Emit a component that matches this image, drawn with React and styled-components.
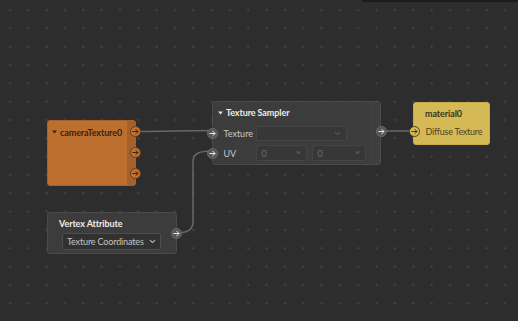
import React from 'react';
import styled, { createGlobalStyle } from 'styled-components';

const GlobalStyle = createGlobalStyle`
	html, body {
		margin: 0;
		padding: 0;
		background: #2d2d2d;
	}
	body {
		font-family: Lato, "Open Sans", sans-serif;
		font-size: 9px;
	}
`;

const Canvas = styled.div`
	position: relative;
	width: 518px;
	height: 321px;
	overflow: hidden;
	background-color: #2d2d2d;
`;

const TopBar = styled.div`
	position: absolute;
	top: 0;
	left: 362px;
	right: 0;
	height: 2px;
	background-color: #1c1c1c;
`;

const Layer = styled.svg`
	position: absolute;
	left: 0;
	top: 0;
	width: 518px;
	height: 321px;
`;

const Node = styled.div`
	position: absolute;
	left: ${props => props.$x}px;
	top: ${props => props.$y}px;
	width: ${props => props.$w}px;
	height: ${props => props.$h}px;
	display: flex;
	border-radius: 3px;
	box-sizing: border-box;
	background-color: ${props => props.$bg || '#3c3c3c'};
	border: 1px solid ${props => props.$border || '#4a4a4a'};
`;

const Body = styled.div`
	flex: 1;
	display: flex;
	flex-direction: column;
	min-width: 0;
`;

const Strip = styled.div`
	width: ${props => props.$w || 9}px;
	display: flex;
	flex-direction: column;
	align-items: flex-end;
	gap: ${props => props.$gap || 0}px;
	padding-top: ${props => props.$top || 0}px;
	background-color: ${props => props.$bg || 'transparent'};
	border-radius: 0 2px 2px 0;
`;

const Header = styled.div`
	display: flex;
	align-items: center;
	gap: 3px;
	height: ${props => props.$h || 20}px;
	padding-left: ${props => props.$pad || 11}px;
	font-weight: 700;
	font-size: 9px;
	letter-spacing: -0.1px;
	color: ${props => props.$color || '#ececec'};
	white-space: nowrap;
`;

const Row = styled.div`
	display: flex;
	align-items: center;
	height: ${props => props.$h || 20}px;
	font-size: 9px;
	color: ${props => props.$color || '#c8c8c8'};
	white-space: nowrap;
`;

const Label = styled.span`
	width: ${props => props.$w || 'auto'};
	margin-left: ${props => props.$ml || 6}px;
	letter-spacing: ${props => props.$ls || 0}px;
	flex-shrink: 0;
`;

const SocketDot = styled.div`
	width: 11px;
	height: 11px;
	border-radius: 50%;
	box-sizing: border-box;
	flex-shrink: 0;
	display: flex;
	align-items: center;
	justify-content: center;
	background-color: ${props => props.$fill};
	border: 1px solid ${props => props.$ring};
	margin-left: ${props => props.$ml || 0}px;
	margin-right: ${props => props.$mr || 0}px;
`;

const Field = styled.div`
	display: flex;
	align-items: center;
	justify-content: space-between;
	box-sizing: border-box;
	flex-shrink: 0;
	width: ${props => props.$w}px;
	height: ${props => props.$h || 15}px;
	margin-left: ${props => props.$ml || 0}px;
	padding: 0 ${props => props.$pad || 5}px;
	background-color: ${props => props.$bg || '#373737'};
	border: 1px solid ${props => props.$border || '#454545'};
	border-radius: 2px;
	color: ${props => props.$color || '#6c6c6c'};
	font-size: 9px;
	letter-spacing: ${props => props.$ls || 0}px;
	white-space: nowrap;
	overflow: hidden;
`;

const Socket = ({ fill, ring, arrow, ml, mr }) => (
	<SocketDot $fill={fill} $ring={ring} $ml={ml} $mr={mr}>
		<svg width="7" height="7" viewBox="0 0 7 7">
			<path d="M0.8 3.5 H6 M3.8 1.3 L6 3.5 L3.8 5.7" fill="none" stroke={arrow} strokeWidth="1" strokeLinecap="round" strokeLinejoin="round" />
		</svg>
	</SocketDot>
);

const Chevron = ({ color }) => (
	<svg width="7" height="5" viewBox="0 0 7 5" style={{ flexShrink: 0 }}>
		<path d="M1 1.2 L3.5 3.6 L6 1.2" fill="none" stroke={color} strokeWidth="1.1" />
	</svg>
);

const Tri = ({ color, w = 5 }) => (
	<svg width={w} height={w * 0.8} viewBox="0 0 5 4" style={{ flexShrink: 0 }}>
		<path d="M0 0.5 H5 L2.5 3.5 Z" fill={color} />
	</svg>
);

const orange = { fill: '#c37430', ring: '#6b3a14', arrow: '#3b230f' };
const gray = { fill: '#565656', ring: '#6a6a6a', arrow: '#e8e8e8' };
const yellow = { fill: '#d8bc55', ring: '#4a4128', arrow: '#3a3320' };

const Grid = () => (
	<Layer>
		<defs>
			<pattern id="dots" x="0.835" y="0.835" width="18.33" height="18.33" patternUnits="userSpaceOnUse">
				<path d="M7.665 9.165 H10.665 M9.165 7.665 V10.665" stroke="#414141" strokeWidth="1" />
			</pattern>
		</defs>
		<rect width="518" height="321" fill="url(#dots)" />
	</Layer>
);

const Wires = () => (
	<Layer>
		<g fill="none" stroke="#686868" strokeWidth="1.5">
			<path d="M137 131.5 C170 131.5 178 130.5 212 130.5" />
			<path d="M177 233 C186 233 193 231 193 222 L193 162 C193 154 198 151 212 151" />
			<path d="M381 131 C395 131 400 131 414 131" />
		</g>
	</Layer>
);

export default function App() {
	return (
		<Canvas>
			<GlobalStyle />
			<Grid />
			<TopBar />
			<Wires />

			<Node $x={47} $y={120} $w={89} $h={66} $bg="#bd6f2f" $border="#a9612a">
				<Body>
					<Header $h={22} $pad={4} $color="#3a2411">
						<Tri color="#3a2411" />cameraTexture0
					</Header>
				</Body>
				<Strip $w={8} $bg="#a5612b" $top={5} $gap={10}>
					<Socket {...orange} mr={-6} />
					<Socket {...orange} mr={-6} />
					<Socket {...orange} mr={-6} />
				</Strip>
			</Node>

			<Node $x={212} $y={101} $w={169} $h={64}>
				<Body>
					<Header $h={21} $pad={5}>
						<Tri color="#e0e0e0" />Texture Sampler
					</Header>
					<Row>
						<Socket {...gray} ml={-6.5} />
						<Label $w="32px">Texture</Label>
						<Field $w={91}>
							<span />
							<Chevron color="#5a5a5a" />
						</Field>
					</Row>
					<Row>
						<Socket {...gray} ml={-6.5} />
						<Label $w="32px">UV</Label>
						<Field $w={51} $h={16}>
							<span>0</span>
							<Tri color="#5a5a5a" />
						</Field>
						<Field $w={54} $h={16} $ml={5}>
							<span>0</span>
							<Tri color="#5a5a5a" />
						</Field>
					</Row>
				</Body>
				<Strip $w={11} $bg="#3f3f3f" $top={24}>
					<Socket {...gray} mr={-6.5} />
				</Strip>
			</Node>

			<Node $x={413} $y={102} $w={77} $h={43} $bg="#d5b954" $border="#c9ad4c">
				<Body>
					<Header $h={21} $color="#3a3322">material0</Header>
					<Row $h={14} $color="#4d4326">
						<Socket {...yellow} ml={-5.5} />
						<Label $ml={6} $ls={-0.25}>Diffuse Texture</Label>
					</Row>
				</Body>
			</Node>

			<Node $x={47} $y={212} $w={130} $h={42}>
				<Body>
					<Header $h={20} $pad={11}>Vertex Attribute</Header>
					<Row $h={17}>
						<Field $w={99} $h={17} $ml={14} $pad={4} $ls={-0.15} $bg="#313131" $border="#4d4d4d" $color="#c4c4c4">
							<span>Texture Coordinates</span>
							<Chevron color="#bdbdbd" />
						</Field>
					</Row>
				</Body>
				<Strip $w={1} $top={15}>
					<Socket {...gray} mr={-6} />
				</Strip>
			</Node>
		</Canvas>
	);
}
